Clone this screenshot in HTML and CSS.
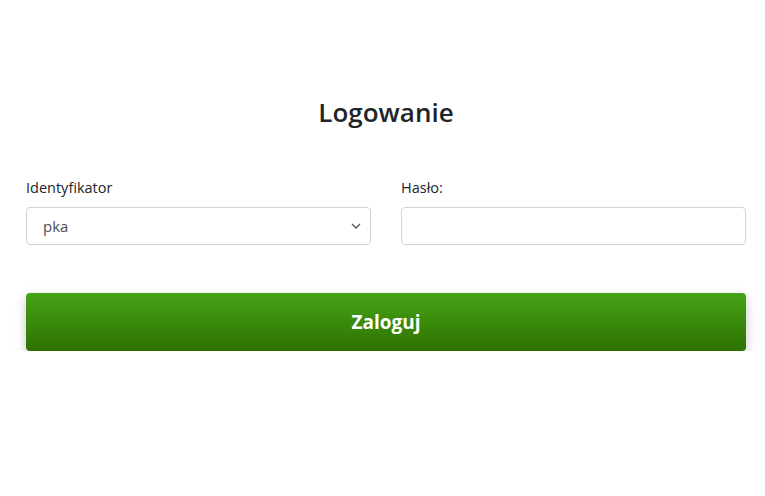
FILE: index.html
```html
<!DOCTYPE html>
<html lang="pl">
<head>
<meta charset="utf-8">
<link rel="stylesheet" href="styles.css">
</head>
<body>
<div class="page">
  <h1 class="title">Logowanie</h1>
  <div class="fields">
    <div class="field">
      <label class="label">Identyfikator</label>
      <div class="select">
        <span class="select-value">pka</span>
        <svg class="chevron" width="10" height="6" viewBox="0 0 10 6"><path d="M1 1l4 4 4-4" fill="none" stroke="#555" stroke-width="1.3"/></svg>
      </div>
    </div>
    <div class="field">
      <label class="label">Hasło:</label>
      <div class="input"></div>
    </div>
  </div>
  <button class="btn">Zaloguj</button>
</div>
</body>
</html>
```
FILE: styles.css
```css
html, body { margin: 0; padding: 0; background: #fff; }
body { font-family: "Open Sans", "Noto Sans", sans-serif; color: #212529; }
.page { width: 720px; margin-left: 26px; padding-top: 94px; }
.title { margin: 0; text-align: center; font-size: 26px; font-weight: 600; line-height: 36px; color: #212529; }
.fields { display: grid; grid-template-columns: 1fr 1fr; column-gap: 30px; margin-top: 47px; }
.field { display: flex; flex-direction: column; }
.label { font-size: 14.5px; line-height: 22px; color: #212529; margin-bottom: 8px; }
.select, .input { height: 38px; box-sizing: border-box; border: 1px solid #ced4da; border-radius: 4px; background: #fff; }
.select { display: flex; align-items: center; justify-content: space-between; padding: 0 9px 0 16px; }
.select-value { font-size: 15px; color: #495057; }
.btn { display: block; width: 100%; height: 58px; margin-top: 48px; border: 0; border-radius: 4px; background: linear-gradient(#46a317, #2d7200); color: #fff; font-family: inherit; font-size: 19px; font-weight: 700; box-shadow: 0 4px 12px rgba(0,0,0,0.22); }
```
